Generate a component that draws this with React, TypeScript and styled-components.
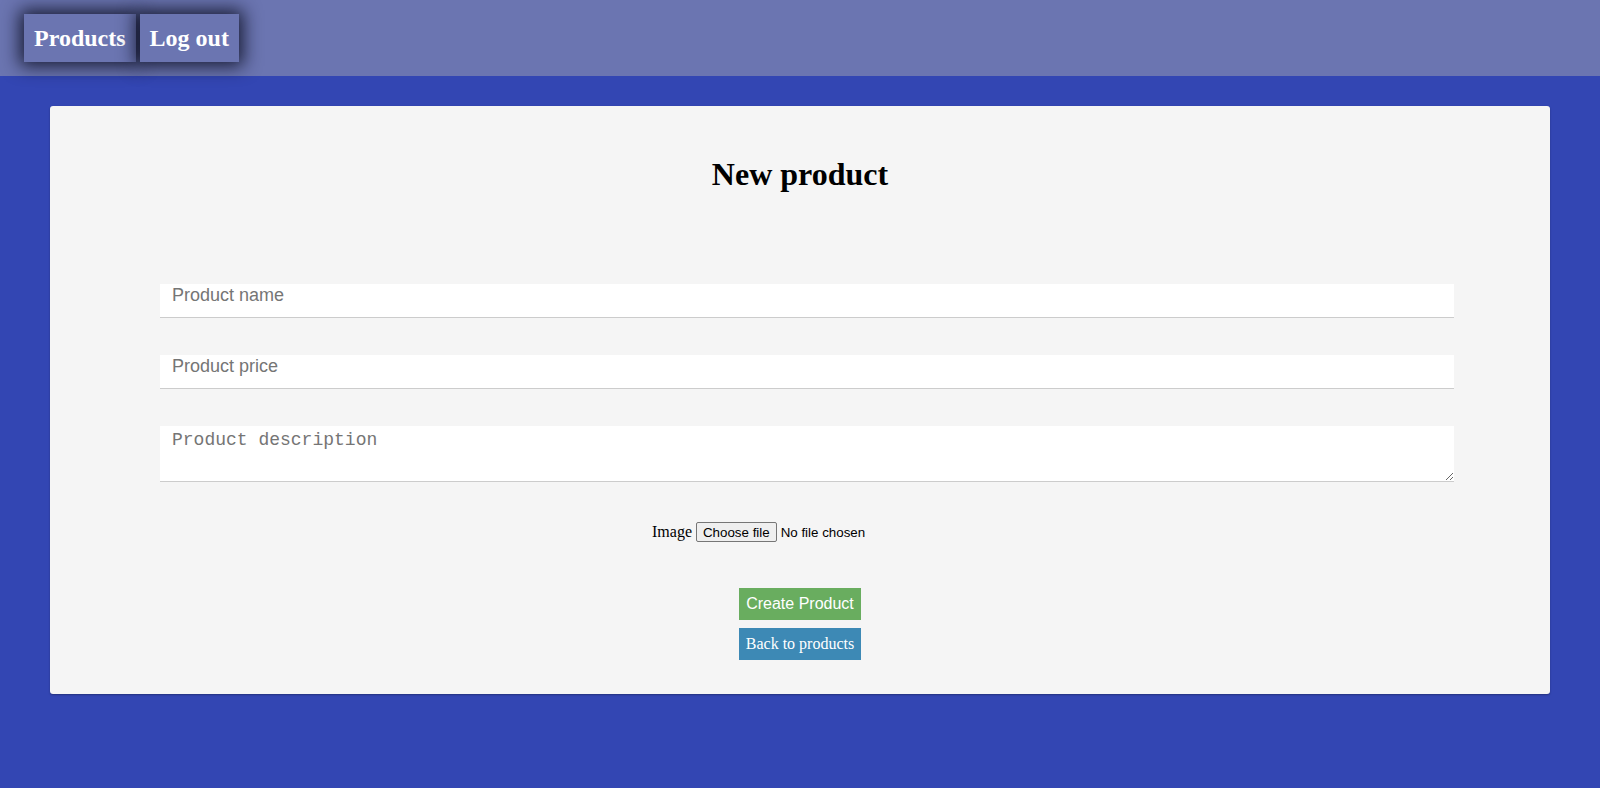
import React, { useRef, useState } from 'react';
import styled, { createGlobalStyle } from 'styled-components';

const GlobalStyle = createGlobalStyle`
  html, body {
    margin: 0;
    padding: 0;
    background-color: #3346b3;
    font-family: 'Liberation Serif', 'Times New Roman', serif;
  }
`;

const NewProductPage = (): JSX.Element => {
  const fileRef = useRef<HTMLInputElement>(null);
  const [fileName, setFileName] = useState('No file chosen');

  return (
    <>
      <GlobalStyle />
      <NavBar>
        <NavButton>Products</NavButton>
        <NavButton>Log out</NavButton>
      </NavBar>
      <Main>
        <Card>
          <Title>New product</Title>
          <Form onSubmit={(e) => e.preventDefault()}>
            <Fields>
              <TextInput type='text' placeholder='Product name' />
              <TextInput type='text' placeholder='Product price' />
              <DescriptionInput placeholder='Product description' />
            </Fields>
            <FileRow>
              <span>Image</span>
              <HiddenFile
                ref={fileRef}
                type='file'
                onChange={(e) =>
                  setFileName(e.target.files?.[0]?.name ?? 'No file chosen')
                }
              />
              <FilePicker>
                <ChooseButton type='button' onClick={() => fileRef.current?.click()}>
                  Choose file
                </ChooseButton>
                <FileName>{fileName}</FileName>
              </FilePicker>
            </FileRow>
            <Actions>
              <ActionButton type='submit' $color='#69ad5f' $font='sans'>
                Create Product
              </ActionButton>
              <ActionButton type='button' $color='#3d89b5' $font='serif'>
                Back to products
              </ActionButton>
            </Actions>
          </Form>
        </Card>
      </Main>
    </>
  );
};

const NavBar = styled.nav`
  display: flex;
  gap: 4px;
  height: 76px;
  box-sizing: border-box;
  padding: 14px 24px;
  background-color: #6b75b1;
`;

const NavButton = styled.a`
  display: block;
  padding: 10px 10px;
  background-color: #6b75b1;
  color: #ffffff;
  font-size: 24px;
  font-weight: bold;
  line-height: 28px;
  cursor: pointer;
  box-shadow: 0 0 18px 4px rgba(8, 10, 28, 0.85);
`;

const Main = styled.main`
  padding: 30px 50px 94px;
`;

const Card = styled.section`
  background-color: #f5f5f5;
  border-radius: 3px;
  box-shadow: 0 1px 2px rgba(0, 0, 0, 0.3);
  padding: 28px 0 34px;
`;

const Title = styled.h1`
  margin: 22px 0 0;
  text-align: center;
  font-size: 32px;
  line-height: 37px;
  font-weight: bold;
  color: #000000;
`;

const Form = styled.form`
  display: flex;
  flex-direction: column;
  align-items: center;
`;

const Fields = styled.div`
  align-self: stretch;
  display: flex;
  flex-direction: column;
  gap: 37px;
  padding: 91px 96px 0 110px;
`;

const TextInput = styled.input`
  box-sizing: border-box;
  width: 100%;
  height: 34px;
  padding: 1px 12px 11px;
  border: none;
  border-bottom: 1px solid #cccccc;
  background-color: #ffffff;
  font-family: 'Liberation Sans', Arial, sans-serif;
  font-size: 18px;
  outline: none;

  &::placeholder {
    color: #757575;
  }
`;

const DescriptionInput = styled.textarea`
  box-sizing: border-box;
  display: block;
  width: 100%;
  height: 56px;
  padding: 4px 12px 10px;
  border: none;
  border-bottom: 1px solid #cccccc;
  background-color: #ffffff;
  font-family: 'Liberation Mono', 'Courier New', monospace;
  font-size: 18px;
  line-height: 20px;
  outline: none;

  &::placeholder {
    color: #757575;
  }
`;

const FileRow = styled.div`
  display: flex;
  align-items: center;
  margin-top: 39px;
  height: 22px;
  font-size: 16px;
  color: #000000;
`;

const HiddenFile = styled.input`
  display: none;
`;

const FilePicker = styled.div`
  display: flex;
  align-items: center;
  width: 252px;
  margin-left: 4px;
`;

const ChooseButton = styled.button`
  box-sizing: border-box;
  height: 20px;
  padding: 0 6px;
  border: 1px solid #767676;
  border-radius: 2px;
  background-color: #efefef;
  color: #000000;
  font-family: 'Liberation Sans', Arial, sans-serif;
  font-size: 13.333px;
  cursor: pointer;
`;

const FileName = styled.span`
  margin-left: 4px;
  font-family: 'Liberation Sans', Arial, sans-serif;
  font-size: 13.333px;
`;

const Actions = styled.div`
  display: flex;
  flex-direction: column;
  gap: 8px;
  margin-top: 45px;
`;

const ActionButton = styled.button<{ $color: string; $font: 'sans' | 'serif' }>`
  width: 122px;
  height: 32px;
  padding: 0;
  border: none;
  background-color: ${(p) => p.$color};
  color: #ffffff;
  font-family: ${(p) =>
    p.$font === 'sans'
      ? "'Liberation Sans', Arial, sans-serif"
      : "'Liberation Serif', 'Times New Roman', serif"};
  font-size: 16px;
  cursor: pointer;
`;

export default NewProductPage;
